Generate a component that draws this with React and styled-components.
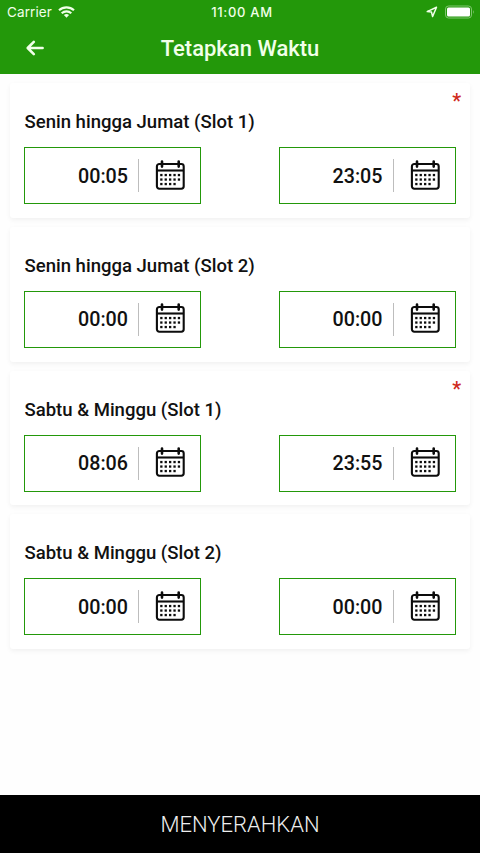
import React from "react";
import styled, { createGlobalStyle } from "styled-components";

const GlobalStyle = createGlobalStyle`
  * { box-sizing: border-box; }
  html, body { margin: 0; padding: 0; background: #fefefe; }
  body { font-family: Roboto, "Liberation Sans", sans-serif; color: #111; }
`;

const Screen = styled.div`
  display: flex;
  flex-direction: column;
  width: 480px;
  height: 853px;
  overflow: hidden;
  background: #fefefe;
`;

const Header = styled.header`
  flex: none;
  height: 74px;
  background: #23980a;
  color: #f1ffe9;
`;

const StatusBar = styled.div`
  display: grid;
  grid-template-columns: 1fr auto 1fr;
  align-items: center;
  height: 24px;
  padding: 0 5px 0 7px;
`;

const StatusGroup = styled.div`
  display: flex;
  align-items: center;
  gap: ${(p) => p.$gap}px;
  justify-content: ${(p) => (p.$end ? "flex-end" : "flex-start")};
`;

const Carrier = styled.span`
  font: 400 13.5px/24px Inter, sans-serif;
  letter-spacing: 0.1px;
`;

const Clock = styled.span`
  padding-left: 2px;
  font: 500 13px/24px Inter, sans-serif;
  letter-spacing: 0.7px;
`;

const TitleBar = styled.div`
  display: grid;
  grid-template-columns: 70px 1fr 70px;
  align-items: center;
  height: 50px;
`;

const BackButton = styled.button`
  display: flex;
  justify-content: center;
  padding: 0 0 2px;
  border: 0;
  background: none;
  color: inherit;
`;

const Title = styled.h1`
  margin: 0;
  text-align: center;
  font-size: 22px;
  line-height: 50px;
  font-weight: 500;
`;

const SlotList = styled.main`
  flex: 1;
  display: flex;
  flex-direction: column;
  gap: 9px;
  padding: 9px 10px 0;
`;

const Card = styled.section`
  position: relative;
  height: 134.8px;
  padding: 26px 14.5px 0 14px;
  border-radius: 3px;
  background: #fff;
  box-shadow: 0 2px 5px rgba(0, 0, 0, 0.055);
`;

const Required = styled.span`
  position: absolute;
  top: 6px;
  right: 9px;
  color: #cf2a20;
  font-size: 20px;
  line-height: 24px;
  font-weight: 500;
`;

const SlotName = styled.h2`
  margin: 0 0 13px;
  padding: 1px 0 0 0.5px;
  font-size: 18.55px;
  line-height: 24px;
  font-weight: 500;
`;

const TimeRow = styled.div`
  display: flex;
  justify-content: space-between;
`;

const TimeField = styled.button`
  display: flex;
  align-items: center;
  justify-content: flex-end;
  width: 177px;
  height: 57px;
  padding: 0 15px 0 0;
  border: 1px solid #23980a;
  background: #fff;
  color: #111;
  font: 500 19.7px/24px Roboto, sans-serif;
`;

const TimeValue = styled.span`
  padding-top: 2px;
`;

const Divider = styled.span`
  width: 1px;
  height: 33px;
  margin: 0 16px 0 10px;
  background: #bdbdbd;
`;

const Submit = styled.button`
  flex: none;
  height: 58px;
  padding: 2px 0 0;
  border: 0;
  background: #000;
  color: #eee;
  font: 300 22px/56px Roboto, sans-serif;
`;

function WifiIcon() {
  return (
    <svg width="17" height="13" viewBox="0 0 17 13" fill="none" stroke="currentColor" strokeWidth="2.1">
      <path d="M1 4.300C5.200.4 11.800.4 16 4.300" />
      <path d="M3.700 7.200C6.400 4.700 10.600 4.700 13.300 7.200" />
      <path d="M8.500 11.700 5.900 9.100Q8.500 6.900 11.100 9.100Z" fill="currentColor" stroke="none" />
    </svg>
  );
}

function LocationIcon() {
  return (
    <svg width="12" height="12" viewBox="0 0 12 12" fill="none" stroke="currentColor" strokeWidth="1.5" strokeLinejoin="round">
      <path d="M10.500 1.200 1.200 5.600 5.500 6.100 6.600 10.500Z" />
    </svg>
  );
}

function BatteryIcon() {
  return (
    <svg width="30" height="14" viewBox="0 0 30 14">
      <rect x="0.500" y="1" width="26" height="12" rx="3" fill="none" stroke="#7fc66f" />
      <rect x="2" y="2.500" width="23" height="9" rx="1.500" fill="#fff" />
      <path d="M28 4.900Q29.800 7 28 9.100Z" fill="#7fc66f" />
    </svg>
  );
}

function ArrowIcon() {
  return (
    <svg width="20" height="16" viewBox="0 0 20 16" fill="none" stroke="currentColor" strokeWidth="2.600" strokeLinecap="round" strokeLinejoin="round">
      <path d="M17.600 8H3M8.800 1.900 2.700 8l6.100 6.100" />
    </svg>
  );
}

const DOTS = [
  [15, [5.900, 10.300, 14.700, 19.100, 23.500]],
  [19.500, [5.900, 10.300, 14.700, 19.100, 23.500]],
  [24, [5.900, 10.300, 14.700, 19.100]],
];

const CalendarGlyph = styled.svg`
  margin-bottom: 2px;
`;

function CalendarIcon() {
  return (
    <CalendarGlyph width="30" height="30" viewBox="0 0 30 30" fill="none" stroke="#0c0c0c">
      <rect x="1.900" y="4" width="26.800" height="24.700" rx="2.400" strokeWidth="2.100" />
      <path d="M1.900 10.500h26.800" strokeWidth="2.100" />
      <path d="M7 1.600v5M23.700 1.600v5" strokeWidth="2.600" strokeLinecap="round" />
      {DOTS.map(([y, xs]) =>
        xs.map((x) => (
          <rect key={`${x}-${y}`} x={x - 0.700} y={y - 1.100} width="2.300" height="2.300" fill="#0c0c0c" stroke="none" />
        ))
      )}
    </CalendarGlyph>
  );
}

const SLOTS = [
  { name: "Senin hingga Jumat (Slot 1)", times: ["00:05", "23:05"], required: true },
  { name: "Senin hingga Jumat (Slot 2)", times: ["00:00", "00:00"] },
  { name: "Sabtu & Minggu (Slot 1)", times: ["08:06", "23:55"], required: true },
  { name: "Sabtu & Minggu (Slot 2)", times: ["00:00", "00:00"] },
];

export default function App() {
  return (
    <Screen>
      <GlobalStyle />
      <Header>
        <StatusBar>
          <StatusGroup $gap={6}>
            <Carrier>Carrier</Carrier>
            <WifiIcon />
          </StatusGroup>
          <Clock>11:00 AM</Clock>
          <StatusGroup $gap={7} $end>
            <LocationIcon />
            <BatteryIcon />
          </StatusGroup>
        </StatusBar>
        <TitleBar>
          <BackButton aria-label="Kembali">
            <ArrowIcon />
          </BackButton>
          <Title>Tetapkan Waktu</Title>
        </TitleBar>
      </Header>
      <SlotList>
        {SLOTS.map((slot) => (
          <Card key={slot.name}>
            {slot.required && <Required>*</Required>}
            <SlotName>{slot.name}</SlotName>
            <TimeRow>
              {slot.times.map((time, i) => (
                <TimeField key={i}>
                  <TimeValue>{time}</TimeValue>
                  <Divider />
                  <CalendarIcon />
                </TimeField>
              ))}
            </TimeRow>
          </Card>
        ))}
      </SlotList>
      <Submit>MENYERAHKAN</Submit>
    </Screen>
  );
}
